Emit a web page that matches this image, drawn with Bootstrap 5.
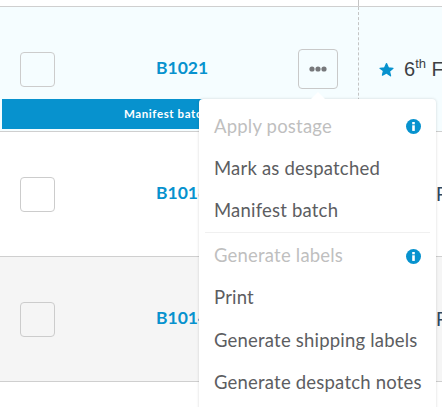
<!DOCTYPE html>
<html lang="en">
  <head>
    <meta charset="UTF-8" />
    <title>Batches</title>
    <link href="https://cdn.jsdelivr.net/npm/bootstrap@5.3.0/dist/css/bootstrap.min.css" rel="stylesheet" />
    <style>
      html, body { height: 407px; overflow: hidden; background: #fff; }
      body { font-family: Lato, "Open Sans", sans-serif; color: #5c5d61; position: relative; }
      .top-strip { height: 7px; border-bottom: 1px solid #cfcfcf; }
      .top-strip div { width: 359px; height: 100%; border-right: 1px dashed #c4c4c4; }
      .batch-row { height: 125px; border-bottom: 1px solid #cfcfcf; position: relative; }
      .batch-row.first { background: #f5fdff; }
      .batch-row.shaded { background: #f5f5f5; }
      .tick-col { width: 75px; padding-left: 20px; }
      .tick-box { width: 35px; height: 35px; border: 1px solid #cccccc; border-radius: 4px; background: transparent; }
      .id-col { width: 212px; color: #0792ce; font-weight: 700; font-size: 17.5px; padding-left: 81px; margin-top: -1px; }
      .act-col { width: 72px; border-right: 1px dashed #c4c4c4; height: 100%; }
      .dots-btn { width: 40px; height: 40px; border: 1px solid #c9c9c9; border-radius: 4px; background: transparent; padding: 0; margin-left: 11px; }
      .date-col { padding-left: 20px; font-family: "Liberation Sans", sans-serif; font-size: 20px; color: #3c3f44; white-space: nowrap; }
      .date-col sup { font-size: 13px; top: -.6em; }
      .star-mark { margin-right: 10px; }
      .date-plain { padding-left: 77px; color: #30475e; }
      .ribbon { position: absolute; left: 2px; bottom: 2px; width: 340px; height: 30px; background: #0792ce; color: #fff; font-size: 11.5px; font-weight: 700; letter-spacing: .6px; line-height: 30px; padding-left: 122px; }
      .action-menu { position: absolute; left: 199px; top: 99px; width: 237px; height: 330px; background: #fff; border-radius: 4px; box-shadow: 0 0 3px rgba(0,0,0,.16); padding: 0 6px; font-size: 18.5px; letter-spacing: .2px; white-space: nowrap; }
      .action-menu::before { content: ""; position: absolute; left: 112px; top: -7px; border-left: 7px solid transparent; border-right: 7px solid transparent; border-bottom: 7px solid #fff; }
      .menu-line { height: 42px; padding: 0 9px; }
      .menu-line.off { color: #bfbfbf; }
      .menu-line.lead-line { height: 49px; padding-top: 6px; }
      .menu-line.group-line { height: 44px; padding-top: 2px; }
      .menu-line.tail-line { height: 42.5px; }
      .menu-rule { border-top: 1px solid #f0f0f0; }
    </style>
  </head>
  <body>
    <div class="top-strip"><div></div></div>

    <div class="batch-row first d-flex align-items-center">
      <div class="tick-col flex-shrink-0"><div class="tick-box"></div></div>
      <div class="id-col flex-shrink-0">B1021</div>
      <div class="act-col flex-shrink-0 d-flex align-items-center">
        <button class="dots-btn d-flex align-items-center justify-content-center" type="button">
          <svg width="18" height="6" viewBox="0 0 18 6"><g fill="#77787b"><circle cx="3" cy="3" r="2.6"/><circle cx="9" cy="3" r="2.6"/><circle cx="15" cy="3" r="2.6"/></g></svg>
        </button>
      </div>
      <div class="date-col d-flex align-items-center">
        <svg class="star-mark" width="15" height="15" viewBox="0 0 24 23"><path fill="#0792ce" stroke="#0792ce" stroke-width="2" stroke-linejoin="round" d="M12 2l3 6.800 7.400.7-5.600 4.900 1.700 7.200L12 17l-6.500 3.600 1.700-7.200L1.600 9.500 9 8.800z"/></svg>
        <span>6<sup>th</sup> F</span>
      </div>
      <div class="ribbon">Manifest batch</div>
    </div>

    <div class="batch-row d-flex align-items-center">
      <div class="tick-col flex-shrink-0"><div class="tick-box"></div></div>
      <div class="id-col flex-shrink-0">B1018</div>
      <div class="act-col flex-shrink-0"></div>
      <div class="date-col date-plain">F</div>
    </div>

    <div class="batch-row shaded d-flex align-items-center">
      <div class="tick-col flex-shrink-0"><div class="tick-box"></div></div>
      <div class="id-col flex-shrink-0">B1014</div>
      <div class="act-col flex-shrink-0"></div>
      <div class="date-col date-plain">F</div>
    </div>

    <div class="action-menu">
      <div class="menu-line lead-line off d-flex align-items-center justify-content-between">
        <span>Apply postage</span>
        <svg width="15" height="15" viewBox="0 0 15 15"><circle cx="7.500" cy="7.500" r="7.500" fill="#0792ce"/><rect x="6.200" y="6.300" width="2.600" height="5.600" fill="#fff"/><rect x="6.200" y="3" width="2.600" height="2.300" fill="#fff"/></svg>
      </div>
      <div class="menu-line d-flex align-items-center">Mark as despatched</div>
      <div class="menu-line d-flex align-items-center">Manifest batch</div>
      <div class="menu-rule"></div>
      <div class="menu-line group-line off d-flex align-items-center justify-content-between">
        <span>Generate labels</span>
        <svg width="15" height="15" viewBox="0 0 15 15"><circle cx="7.500" cy="7.500" r="7.500" fill="#0792ce"/><rect x="6.200" y="6.300" width="2.600" height="5.600" fill="#fff"/><rect x="6.200" y="3" width="2.600" height="2.300" fill="#fff"/></svg>
      </div>
      <div class="menu-line tail-line d-flex align-items-center">Print</div>
      <div class="menu-line tail-line d-flex align-items-center">Generate shipping labels</div>
      <div class="menu-line tail-line d-flex align-items-center">Generate despatch notes</div>
    </div>

    <script src="https://cdn.jsdelivr.net/npm/bootstrap@5.3.0/dist/js/bootstrap.bundle.min.js"></script>
  </body>
</html>
